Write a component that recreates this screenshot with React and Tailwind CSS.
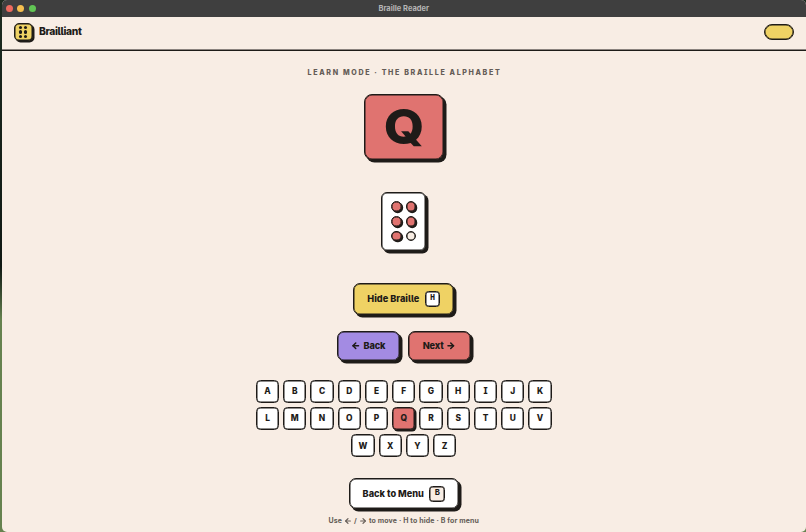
import { clsx } from "clsx";
import { ArrowLeft, ArrowRight } from "lucide-react";

const rows = ["ABCDEFGHIJK", "LMNOPQRSTUV", "WXYZ"];
const current = "Q";
// left/right pairs, top to bottom
const dots = [true, true, true, true, true, false];

function TitleBar() {
  return (
    <div className="relative flex h-[16.5px] shrink-0 items-center justify-center bg-[#3f3f3f] [font-feature-settings:normal]">
      <div className="absolute left-1 flex gap-[4.5px]">
        <span className="size-[7px] rounded-full bg-[#ed6a5f]" />
        <span className="size-[7px] rounded-full bg-[#f5bf4f]" />
        <span className="size-[7px] rounded-full bg-[#61c554]" />
      </div>
      <span className="pt-px text-[7.5px] font-bold text-[#b5b5b5]">Braille Reader</span>
    </div>
  );
}

function Logo() {
  return (
    <div className="grid h-[18.5px] w-[18.5px] grid-cols-[auto_auto] place-content-center gap-x-[2px] gap-y-[1.7px] rounded-[5px] border border-[#1e1b18] bg-[#efd264] shadow-[inset_0_0_0_0.5px_#1e1b18,1.5px_1.5px_0_#1e1b18]">
      {dots.map((_, i) => (
        <span key={i} className="size-[3.1px] rounded-full bg-[#1e1b18]" />
      ))}
    </div>
  );
}

function Header() {
  return (
    <header className="flex h-[34px] shrink-0 items-center justify-between border-b border-[#1e1b18] pr-[12.5px] pb-[2px] pl-[12.5px] shadow-[inset_0_-0.5px_0_#1e1b18]">
      <div className="flex items-center gap-[6.5px]">
        <Logo />
        <span className="text-[10.3px] font-extrabold tracking-[-0.35px]">Brailliant</span>
      </div>
      <div className="h-[16.5px] w-[29.5px] rounded-full border border-[#1e1b18] bg-[#efd264] shadow-[inset_0_0_0_0.5px_#1e1b18]" />
    </header>
  );
}

function Button({ className, children }) {
  return (
    <button
      className={clsx(
        "flex items-center justify-center rounded-[7px] border border-[#1e1b18] text-[9.2px] font-extrabold shadow-[inset_0_0_0_0.5px_#1e1b18,2.5px_2.5px_0_#1e1b18]",
        className
      )}
    >
      {children}
    </button>
  );
}

function Shortcut({ className, children }) {
  return (
    <kbd
      className={clsx(
        "flex size-[15.5px] items-center justify-center rounded-[3.5px] border border-[#1e1b18] font-['Liberation_Mono',monospace] text-[8.5px] font-bold shadow-[inset_0_0_0_0.5px_#1e1b18]",
        className
      )}
    >
      {children}
    </kbd>
  );
}

function Key({ letter }) {
  return (
    <button
      className={clsx(
        "flex size-[23.25px] items-center justify-center rounded-[4.5px] border border-[#1e1b18] pt-[0.5px] text-[8.4px] font-extrabold",
        letter === current
          ? "bg-[#e07370] shadow-[inset_0_0_0_0.5px_#1e1b18,1.5px_1.5px_0_#1e1b18]"
          : "bg-white shadow-[inset_0_0_0_0.5px_#1e1b18]"
      )}
    >
      {letter}
    </button>
  );
}

export default function App() {
  return (
    <div className="h-[532px] w-full overflow-hidden bg-linear-to-b from-[#1d2b20] via-[#101914] via-50% to-[#66824f] to-60% pl-[1.5px] font-['Inter',sans-serif] text-[#1e1b18] [font-feature-settings:'cv05','cv08'] [font-optical-sizing:none]">
      <div className="flex h-full flex-col overflow-hidden rounded-[5px] bg-[#f8ede4]">
        <TitleBar />
        <Header />
        <main className="flex flex-col items-center">
          <p className="mt-[17.5px] h-[9px] pl-[1.5px] text-[7.1px] leading-[9px] font-extrabold tracking-[1.64px] whitespace-nowrap text-[#645c56]">
            LEARN MODE · THE BRAILLE ALPHABET
          </p>

          <div className="mt-[17px] flex h-[66px] w-[80px] items-center justify-center rounded-[8px] border border-[#1e1b18] bg-[#e07370] text-[48.5px] leading-none font-extrabold shadow-[inset_0_0_0_0.5px_#1e1b18,2.5px_2.5px_0_#1e1b18]">
            <span className="ml-px scale-x-107">{current}</span>
          </div>

          <div className="mt-[32px] grid h-[58.5px] w-[45px] grid-cols-[auto_auto] place-content-center gap-[4px] rounded-[6px] border border-[#1e1b18] bg-white shadow-[inset_0_0_0_0.5px_#1e1b18,2.5px_2.5px_0_#1e1b18]">
            {dots.map((raised, i) => (
              <span
                key={i}
                className={clsx(
                  "size-[10.6px] rounded-full border border-[#1e1b18]",
                  raised
                    ? "bg-[#e07370] shadow-[inset_0_0_0_0.5px_#1e1b18,1.2px_1.2px_0_#1e1b18]"
                    : "bg-[#f8ede4] shadow-[inset_0_0_0_0.5px_#1e1b18]"
                )}
              />
            ))}
          </div>

          <Button className="mt-[32.5px] h-[31.5px] w-[101px] gap-[5.5px] bg-[#efd264]">
            Hide Braille <Shortcut className="bg-white">H</Shortcut>
          </Button>

          <div className="mt-[16.5px] flex gap-[8.5px]">
            <Button className="h-[29.5px] w-[62.75px] gap-[3px] bg-[#a38be3]">
              <ArrowLeft size={9.5} strokeWidth={3.8} />
              <span className="tracking-[-0.2px]">Back</span>
            </Button>
            <Button className="h-[29.5px] w-[62.75px] gap-[3px] bg-[#e07370]">
              <span className="tracking-[-0.2px]">Next</span>
              <ArrowRight size={9.5} strokeWidth={3.8} />
            </Button>
          </div>

          <div className="mt-[19px] flex flex-col items-center gap-[4px]">
            {rows.map((row) => (
              <div key={row} className="flex gap-[4px]">
                {row.split("").map((letter) => (
                  <Key key={letter} letter={letter} />
                ))}
              </div>
            ))}
          </div>

          <Button className="mt-[21px] h-[31px] w-[110px] gap-[5.5px] bg-white">
            Back to Menu <Shortcut className="bg-[#f8ede4]">B</Shortcut>
          </Button>

          <p className="mt-[7px] flex h-[9px] items-center gap-[2px] text-[7px] leading-[9px] font-bold tracking-[0.14px] whitespace-nowrap text-[#645c56]">
            Use <ArrowLeft size={8} strokeWidth={3.6} /> / <ArrowRight size={8} strokeWidth={3.6} /> to move · H to hide · B for menu
          </p>
        </main>
      </div>
    </div>
  );
}
